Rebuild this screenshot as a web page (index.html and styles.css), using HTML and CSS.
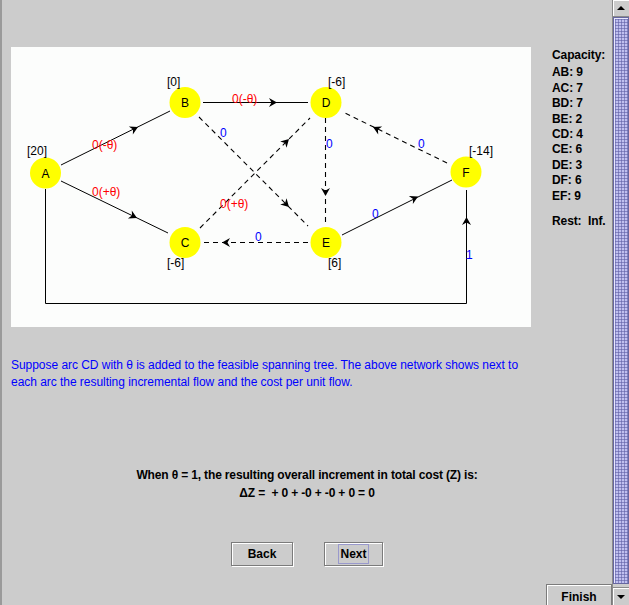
FILE: index.html
```html
<!DOCTYPE html>
<html>
<head>
<meta charset="utf-8">
<link rel="stylesheet" href="styles.css">
</head>
<body>
<div class="app">
  <div class="main">
    <div class="top">
      <div class="panel">
        <svg class="net" width="520" height="280" viewBox="0 0 520 280">
          <defs>
            <path id="ah" d="M0,0 L-8,-4.5 L-5.5,0 L-8,4.5 Z"/>
          </defs>
          <g class="solid">
            <path d="M50 118 L159 64"/>
            <path d="M50 134 L157 186"/>
            <path d="M192 55.5 L297 55.5"/>
            <path d="M331 188 L441 133"/>
            <path d="M34.5 142 L34.5 256.5 L455.5 256.5 L455.5 143"/>
          </g>
          <g class="dashed">
            <path d="M188 70 L297 179"/>
            <path d="M189 181 L299 71"/>
            <path d="M314.5 71 L314.5 179"/>
            <path d="M436 116 L332 65"/>
            <path d="M297 195.5 L192 195.5"/>
          </g>
          <g class="arrows">
            <use href="#ah" transform="translate(127 80) rotate(-26.3)"/>
            <use href="#ah" transform="translate(126 171) rotate(25.9)"/>
            <use href="#ah" transform="translate(266 55.5)"/>
            <use href="#ah" transform="translate(278 160) rotate(45)"/>
            <use href="#ah" transform="translate(278 92) rotate(-45)"/>
            <use href="#ah" transform="translate(314.5 149) rotate(90)"/>
            <use href="#ah" transform="translate(362 80) rotate(206)"/>
            <use href="#ah" transform="translate(211 195.5) rotate(180)"/>
            <use href="#ah" transform="translate(407 149.5) rotate(-26.6)"/>
            <use href="#ah" transform="translate(455.5 170) rotate(-90)"/>
          </g>
          <g class="nodes">
            <circle cx="34.5" cy="126" r="15.5"/>
            <circle cx="174" cy="55.5" r="15.5"/>
            <circle cx="315" cy="55.5" r="15.5"/>
            <circle cx="455" cy="125" r="15.5"/>
            <circle cx="174" cy="195.5" r="15.5"/>
            <circle cx="315" cy="195.5" r="15.5"/>
          </g>
          <g class="letters">
            <text x="34.5" y="130.5">A</text>
            <text x="174" y="60">B</text>
            <text x="315" y="60">D</text>
            <text x="455" y="129.5">F</text>
            <text x="174" y="200">C</text>
            <text x="315" y="200">E</text>
          </g>
          <g class="supply">
            <text x="16" y="108">[20]</text>
            <text x="156" y="39">[0]</text>
            <text x="317" y="39">[-6]</text>
            <text x="458" y="108">[-14]</text>
            <text x="156" y="220">[-6]</text>
            <text x="317" y="220">[6]</text>
          </g>
          <g class="red">
            <text x="81" y="102">0(-θ)</text>
            <text x="81" y="149">0(+θ)</text>
            <text x="221" y="56">0(-θ)</text>
            <text x="209" y="161">0(+θ)</text>
          </g>
          <g class="blue">
            <text x="209" y="90">0</text>
            <text x="315" y="101">0</text>
            <text x="407" y="101">0</text>
            <text x="244" y="194">0</text>
            <text x="361" y="171">0</text>
            <text x="455" y="212">1</text>
          </g>
        </svg>
      </div>
      <div class="caps">
        <div class="cap-title">Capacity:</div>
        <div>AB: 9</div>
        <div>AC: 7</div>
        <div>BD: 7</div>
        <div>BE: 2</div>
        <div>CD: 4</div>
        <div>CE: 6</div>
        <div>DE: 3</div>
        <div>DF: 6</div>
        <div>EF: 9</div>
        <div class="cap-rest">Rest:&nbsp; Inf.</div>
      </div>
    </div>
    <p class="desc">Suppose arc CD with θ is added to the feasible spanning tree. The above network shows next to<br>each arc the resulting incremental flow and the cost per unit flow.</p>
    <div class="result">
      <div>When θ = 1, the resulting overall increment in total cost (Z) is:</div>
      <div class="dz">ΔZ =  + 0 + -0 + -0 + 0 = 0</div>
    </div>
    <div class="nav">
      <button class="btn back">Back</button>
      <button class="btn next"><span class="focus">Next</span></button>
    </div>
    <div class="finish-row">
      <button class="btn finish">Finish</button>
    </div>
  </div>
  <div class="scrollbar">
    <div class="sb-btn sb-up"><span class="tri-up"></span></div>
    <div class="sb-track"><div class="sb-thumb"></div></div>
    <div class="sb-btn sb-down"><span class="tri-down"></span></div>
  </div>
</div>
</body>
</html>
```
FILE: styles.css
```css
html, body {
  margin: 0;
  padding: 0;
}
body {
  width: 629px;
  height: 605px;
  overflow: hidden;
  background: #cccccc;
  font-family: "Liberation Sans", Arial, sans-serif;
  font-size: 12px;
  color: #000;
}
.app {
  display: flex;
  width: 629px;
  height: 605px;
  overflow: hidden;
}
.main {
  width: 610px;
  height: 558px;
  border-left: 2px solid #9a9a9a;
  padding-top: 47px;
  display: flex;
  flex-direction: column;
  overflow: hidden;
}
.top {
  display: flex;
  margin-left: 9px;
}
.panel {
  width: 520px;
  height: 280px;
  background: #fcfdfc;
}
.net {
  display: block;
}
.net .solid path {
  fill: none;
  stroke: #000;
  stroke-width: 1;
}
.net .dashed path {
  fill: none;
  stroke: #000;
  stroke-width: 1.1;
  stroke-dasharray: 5 4;
}
.net .arrows use {
  fill: #000;
}
.net .nodes circle {
  fill: #ffff00;
}
.net text {
  font-family: "Liberation Sans", Arial, sans-serif;
  font-size: 12px;
}
.net .letters text {
  text-anchor: middle;
  fill: #000;
}
.net .supply text {
  fill: #000;
}
.net .red text {
  fill: #ff0000;
}
.net .blue text {
  fill: #0000ff;
}
.caps {
  margin-left: 21px;
  padding-top: 1px;
  font-weight: bold;
  line-height: 15.4px;
  letter-spacing: -0.1px;
}
.cap-title {
  margin-bottom: 2px;
}
.cap-rest {
  margin-top: 10px;
}
.desc {
  margin: 30px 0 0 9px;
  color: #0000ff;
  line-height: 16.5px;
  white-space: nowrap;
  letter-spacing: -0.04px;
}
.result {
  margin-top: 76px;
  text-align: center;
  font-weight: bold;
  line-height: 18.3px;
  letter-spacing: -0.15px;
}
.dz {
  white-space: pre;
}
.nav {
  margin-top: 39px;
  display: flex;
  justify-content: center;
  gap: 31px;
}
.btn {
  height: 24px;
  padding: 0;
  background: #cccccc;
  border: 1px solid #7b7b7b;
  box-shadow: inset 1px 1px 0 #ffffff, 1px 1px 0 #ffffff;
  font-family: "Liberation Sans", Arial, sans-serif;
  font-size: 12px;
  font-weight: bold;
  color: #000;
  border-radius: 0;
}
.back {
  width: 62px;
}
.next {
  width: 59px;
}
.focus {
  display: inline-block;
  line-height: 14px;
  outline: 1px solid #9999cc;
  padding: 2px 1px;
}
.finish-row {
  margin-top: 18px;
  display: flex;
  justify-content: flex-end;
}
.finish {
  width: 66px;
  height: 21px;
  flex: none;
  padding-top: 5px;
  border-bottom: none;
  box-shadow: inset 1px 1px 0 #ffffff;
  line-height: 14px;
}
.scrollbar {
  width: 16px;
  height: 605px;
  border-left: 1px solid #8a8a8a;
  display: flex;
  flex-direction: column;
  background: #cccccc;
}
.sb-btn {
  height: 16px;
  flex: none;
  display: flex;
  align-items: center;
  justify-content: center;
  background: #cccccc;
  box-shadow: inset 1px 1px 0 #ffffff;
  border-bottom: 1px solid #8a8a8a;
}
.sb-down {
  border-bottom: none;
  border-top: 1px solid #8a8a8a;
  height: 17px;
}
.tri-up {
  width: 0;
  height: 0;
  border-left: 4px solid transparent;
  border-right: 4px solid transparent;
  border-bottom: 4px solid #000;
}
.tri-down {
  width: 0;
  height: 0;
  border-left: 4px solid transparent;
  border-right: 4px solid transparent;
  border-top: 4px solid #000;
}
.sb-track {
  flex: 1;
  padding-bottom: 3px;
  display: flex;
}
.sb-thumb {
  flex: 1;
  background-color: #b4b4ea;
  background-image:
    radial-gradient(circle, #6f6fb0 0.9px, transparent 1.2px),
    radial-gradient(circle, #e4e4ff 0.7px, transparent 1px);
  background-size: 3px 3px, 3px 3px;
  background-position: 0 0, 1.5px 1.5px;
  border: 1px solid #6666a0;
  box-shadow: inset 1px 1px 0 #e8e8ff;
}
```
